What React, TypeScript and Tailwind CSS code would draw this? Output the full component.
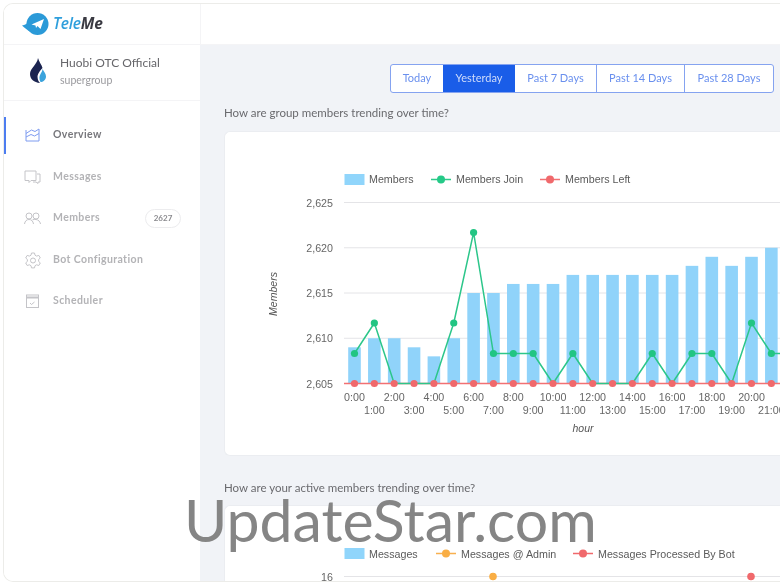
import React from "react";

const xOf = (i: number) => 354.5 + i * 19.85;
const yOf = (v: number) => 383.5 - (v - 2605) * 9.05;

const bars = [2609, 2610, 2610, 2609, 2608, 2610, 2615, 2615, 2616, 2616, 2616, 2617, 2617, 2617, 2617, 2617, 2617, 2618, 2619, 2618, 2619, 2620, 2621];
const join = [353.5, 323, 383.5, 383.5, 383.5, 323, 232.5, 353.5, 353.5, 353.5, 383.5, 353.5, 383.5, 383.5, 383.5, 353.5, 383.5, 353.5, 353.5, 383.5, 323, 353.5, 353.5];

function Nav({ icon, label, active, badge }: { icon: React.ReactNode; label: string; active?: boolean; badge?: string }) {
  return (
    <div className="relative flex h-[41.5px] items-center pl-[20px] pr-[19px]">
      {active && <div className="absolute left-0 top-[2px] h-[37px] w-[2px] bg-[#4d7df0]" />}
      <div className="flex w-[29px] items-center">{icon}</div>
      <span className={`text-[10.5px] font-bold tracking-[0.4px] ${active ? "text-[#77777c]" : "text-[#b3b3b6]"}`}>{label}</span>
      {badge && (
        <span className="ml-auto flex h-[19px] w-[36px] items-center justify-center rounded-full border border-[#ececee] text-[8px] font-bold text-[#8a8a8e]">
          {badge}
        </span>
      )}
    </div>
  );
}

const iconBase = { width: 18, height: 18, viewBox: "0 0 18 18", fill: "none", strokeWidth: 1 };

function Chart() {
  return (
    <svg className="block" width="780" height="330" viewBox="0 130 780 330" style={{ fontFamily: "'Liberation Sans', sans-serif" }}>
      <rect x="344.5" y="174" width="20" height="11" fill="#90d5fb" />
      <text x="369" y="183" fontSize="10.7" fill="#5a5a5a">Members</text>
      <line x1="431" x2="451" y1="179.5" y2="179.5" stroke="#2ecb8a" strokeWidth="1.5" />
      <circle cx="441" cy="179.5" r="4" fill="#25c987" />
      <text x="456" y="183" fontSize="10.7" fill="#5a5a5a">Members Join</text>
      <line x1="540" x2="560" y1="179.5" y2="179.5" stroke="#f27173" strokeWidth="1.5" />
      <circle cx="550" cy="179.5" r="4" fill="#f0696c" />
      <text x="565" y="183" fontSize="10.7" fill="#5a5a5a">Members Left</text>

      {[2625, 2620, 2615, 2610].map((v) => (
        <g key={v}>
          <line x1="344" x2="780" y1={yOf(v)} y2={yOf(v)} stroke="#e4e4e7" strokeWidth="1" />
          <text x="333" y={yOf(v) + 4} fontSize="10.7" fill="#666" textAnchor="end">{v.toLocaleString("en-US")}</text>
        </g>
      ))}
      <text x="333" y="387.5" fontSize="10.7" fill="#666" textAnchor="end">2,605</text>

      {bars.map((v, i) => (
        <rect key={i} x={xOf(i) - 6.3} y={yOf(v)} width="12.6" height={383.5 - yOf(v)} fill="#90d3fa" />
      ))}
      <line x1="344" x2="780" y1="383.5" y2="383.5" stroke="#f27173" strokeWidth="1.5" />
      <polyline points={join.map((y, i) => `${xOf(i)},${y}`).join(" ")} fill="none" stroke="#2cc68a" strokeWidth="1.5" strokeLinejoin="round" />
      {join.map((y, i) => (y < 380 ? <circle key={i} cx={xOf(i)} cy={y} r="3.6" fill="#22c583" /> : null))}
      {bars.map((_, i) => (
        <circle key={i} cx={xOf(i)} cy="383.5" r="3.6" fill="#f0696c" />
      ))}

      {bars.slice(0, 22).map((_, i) => (
        <text key={i} x={xOf(i)} y={i % 2 === 0 ? 400.5 : 414} fontSize="10.7" fill="#666" textAnchor="middle">{`${i}:00`}</text>
      ))}
      <text x="583" y="432" fontSize="10.5" fontStyle="italic" fill="#555" textAnchor="middle">hour</text>
      <text x="0" y="0" fontSize="10.5" fontStyle="italic" fill="#555" textAnchor="middle" transform="translate(277 294) rotate(-90)">Members</text>
    </svg>
  );
}

function Chart2() {
  return (
    <svg className="block" width="780" height="80" viewBox="0 505 780 80" style={{ fontFamily: "'Liberation Sans', sans-serif" }}>
      <rect x="344.5" y="548" width="20" height="11" fill="#90d5fb" />
      <text x="369" y="557.5" fontSize="10.7" fill="#5a5a5a">Messages</text>
      <line x1="436" x2="456" y1="553.5" y2="553.5" stroke="#f8b04f" strokeWidth="1.5" />
      <circle cx="446" cy="553.5" r="4" fill="#f9ae45" />
      <text x="461" y="557.5" fontSize="10.7" fill="#5a5a5a">Messages @ Admin</text>
      <line x1="573" x2="593" y1="553.5" y2="553.5" stroke="#f0696c" strokeWidth="1.5" />
      <circle cx="583" cy="553.5" r="4" fill="#f0696c" />
      <text x="598" y="557.5" fontSize="10.7" fill="#5a5a5a">Messages Processed By Bot</text>
      <line x1="344" x2="780" y1="576.5" y2="576.5" stroke="#e4e4e7" />
      <text x="333" y="580.5" fontSize="10.7" fill="#666" textAnchor="end">16</text>
      <circle cx="493" cy="576.5" r="3.8" fill="#f9ae45" />
      <circle cx="751" cy="576.5" r="3.8" fill="#f0696c" />
    </svg>
  );
}

export default function App() {
  return (
    <div className="relative h-[585px] w-[780px] overflow-hidden bg-white" style={{ fontFamily: "Lato, 'Open Sans', sans-serif" }}>
      <div className="h-full pb-[3px] pl-[3px] pt-[3px] blur-[0.4px]">
        <div className="flex h-full overflow-hidden rounded-l-[10px] border border-r-0 border-[#ecece9]">
          <aside className="flex w-[196px] shrink-0 flex-col bg-white">
            <div className="flex h-[41px] items-center border-b border-[#f4f4f6] pl-[18px]">
              <svg width="28" height="24" viewBox="0 0 28 24">
                <circle cx="15.5" cy="12" r="11" fill="#2b9ad8" />
                <path d="M0 13.5 C3 13 5 12 6 10 L9 20 C6 19 3 16 0 13.5 Z" fill="#2b9ad8" />
                <path d="M9.5 12.5 L22 7 L18.5 17 L15.5 14 L14 16 L13.5 13.5 Z" fill="#fff" />
              </svg>
              <span className="ml-[3px] text-[15.5px] font-semibold italic leading-none tracking-[-0.2px] text-[#2f9fdc]" style={{ fontFamily: "'Open Sans', sans-serif" }}>
                Tele<span className="font-bold text-[#3a3a42]">Me</span>
              </span>
            </div>
            <div className="flex h-[56px] items-center border-b border-[#f4f4f6] pb-[4px] pl-[26px]">
              <svg width="16" height="25" viewBox="0 0 16 25">
                <path d="M8 0 C9 4 12 7 12.5 10 C10 13 8 15 7.5 18 C7.5 21 8 23 10 25 C4 24.5 0 21 0 16 C0 10 7 7 8 0 Z" fill="#1b2450" />
                <path d="M12.5 11 C14 14 16 15.5 16 18.5 C16 22 13 24 10.5 24 C9 21 9 18.5 10.5 16 C11.5 14.5 12.3 13 12.5 11 Z" fill="#3ba3dc" />
              </svg>
              <div className="ml-[14px]">
                <div className="text-[12px] leading-[16px] text-[#66666a]">Huobi OTC Official</div>
                <div className="mt-[2px] text-[10.5px] leading-[14px] text-[#9a9a9e]">supergroup</div>
              </div>
            </div>
            <div className="pt-[13.5px]">
              <Nav
                active
                label="Overview"
                icon={
                  <svg {...iconBase} stroke="#7f9cf0">
                    <path d="M2 4v11h13V3l-4 2.5L7.5 4 2 7.5M2 11l5-2.5 3.5 1.500L15 7.5" />
                  </svg>
                }
              />
              <Nav
                label="Messages"
                icon={
                  <svg {...iconBase} stroke="#c4c4c8">
                    <path d="M1 3h11v9.5H7L5 14.5v-2H1zM13 6h3v8h-2v1.5L12 14H9" />
                  </svg>
                }
              />
              <Nav
                label="Members"
                badge="2627"
                icon={
                  <svg {...iconBase} stroke="#c4c4c8">
                    <circle cx="5" cy="7" r="3" />
                    <circle cx="12" cy="7" r="3" />
                    <path d="M0.5 15c.5-3 2-4.5 4.5-4.5S9 12 9.5 15M8.5 10.8c1-.3 2.5-.5 3.5-.3 2.5.3 4 2 4.5 4.5" />
                  </svg>
                }
              />
              <Nav
                label="Bot Configuration"
                icon={
                  <svg {...iconBase} stroke="#c4c4c8">
                    <path d="M7.5 2h3l.5 2.2 1.6.9 2.2-.7 1.5 2.6-1.7 1.5v1.9l1.7 1.5-1.5 2.6-2.2-.7-1.6.9-.5 2.2h-3L7 14.7l-1.6-.9-2.2.7-1.5-2.6 1.7-1.5V8.5L1.7 7l1.5-2.6 2.2.7L7 4.2z" />
                    <circle cx="9" cy="9.5" r="2.5" />
                  </svg>
                }
              />
              <Nav
                label="Scheduler"
                icon={
                  <svg {...iconBase} stroke="#c4c4c8">
                    <rect x="2.5" y="3" width="12" height="12.5" />
                    <path d="M2.5 5.5h12" strokeWidth="2" />
                    <path d="M6 11l1.500 1.500 3-2.500" />
                  </svg>
                }
              />
            </div>
          </aside>
          <main className="min-w-0 flex-1 overflow-hidden">
            <div className="h-[41px] border-b border-l border-[#f4f4f6] bg-white" />
            <div className="h-full bg-[#f1f3f7]">
              <div className="pl-[190px] pt-[19px]">
                <div className="flex h-[29px] w-[384px] overflow-hidden rounded-[3px] border border-[#85a3f0] bg-white text-[11px] text-[#6a90ee]">
                  <div className="flex w-[52px] items-center justify-center">Today</div>
                  <div className="flex w-[72px] items-center justify-center bg-[#1a5de8] text-[#cfdcfb]">Yesterday</div>
                  <div className="flex w-[82px] items-center justify-center border-r border-[#85a3f0]">Past 7 Days</div>
                  <div className="flex w-[88px] items-center justify-center border-r border-[#85a3f0]">Past 14 Days</div>
                  <div className="flex flex-1 items-center justify-center">Past 28 Days</div>
                </div>
              </div>
              <div className="pl-[24px]">
                <div className="mt-[10px] text-[11.5px] leading-[20px] text-[#6a6a6e]">How are group members trending over time?</div>
                <div className="relative mt-[8px] h-[325px] overflow-hidden rounded-l-[6px] border border-r-0 border-[#ebedf1] bg-white">
                  <div className="absolute left-[-225px] top-[-2px]"><Chart /></div>
                </div>
                <div className="mt-[21.5px] text-[11.5px] leading-[20px] text-[#6a6a6e]">How are your active members trending over time?</div>
                <div className="relative mt-[7.5px] h-[90px] overflow-hidden rounded-l-[6px] border border-r-0 border-[#ebedf1] bg-white">
                  <div className="absolute left-[-225px] top-[-1px]"><Chart2 /></div>
                </div>
              </div>
            </div>
          </main>
        </div>
      </div>
      <div className="pointer-events-none absolute left-[184px] top-[482px] text-[59px] leading-[76px] text-[#858585]" style={{ fontFamily: "Lato, sans-serif" }}>
        UpdateStar.com
      </div>
    </div>
  );
}
